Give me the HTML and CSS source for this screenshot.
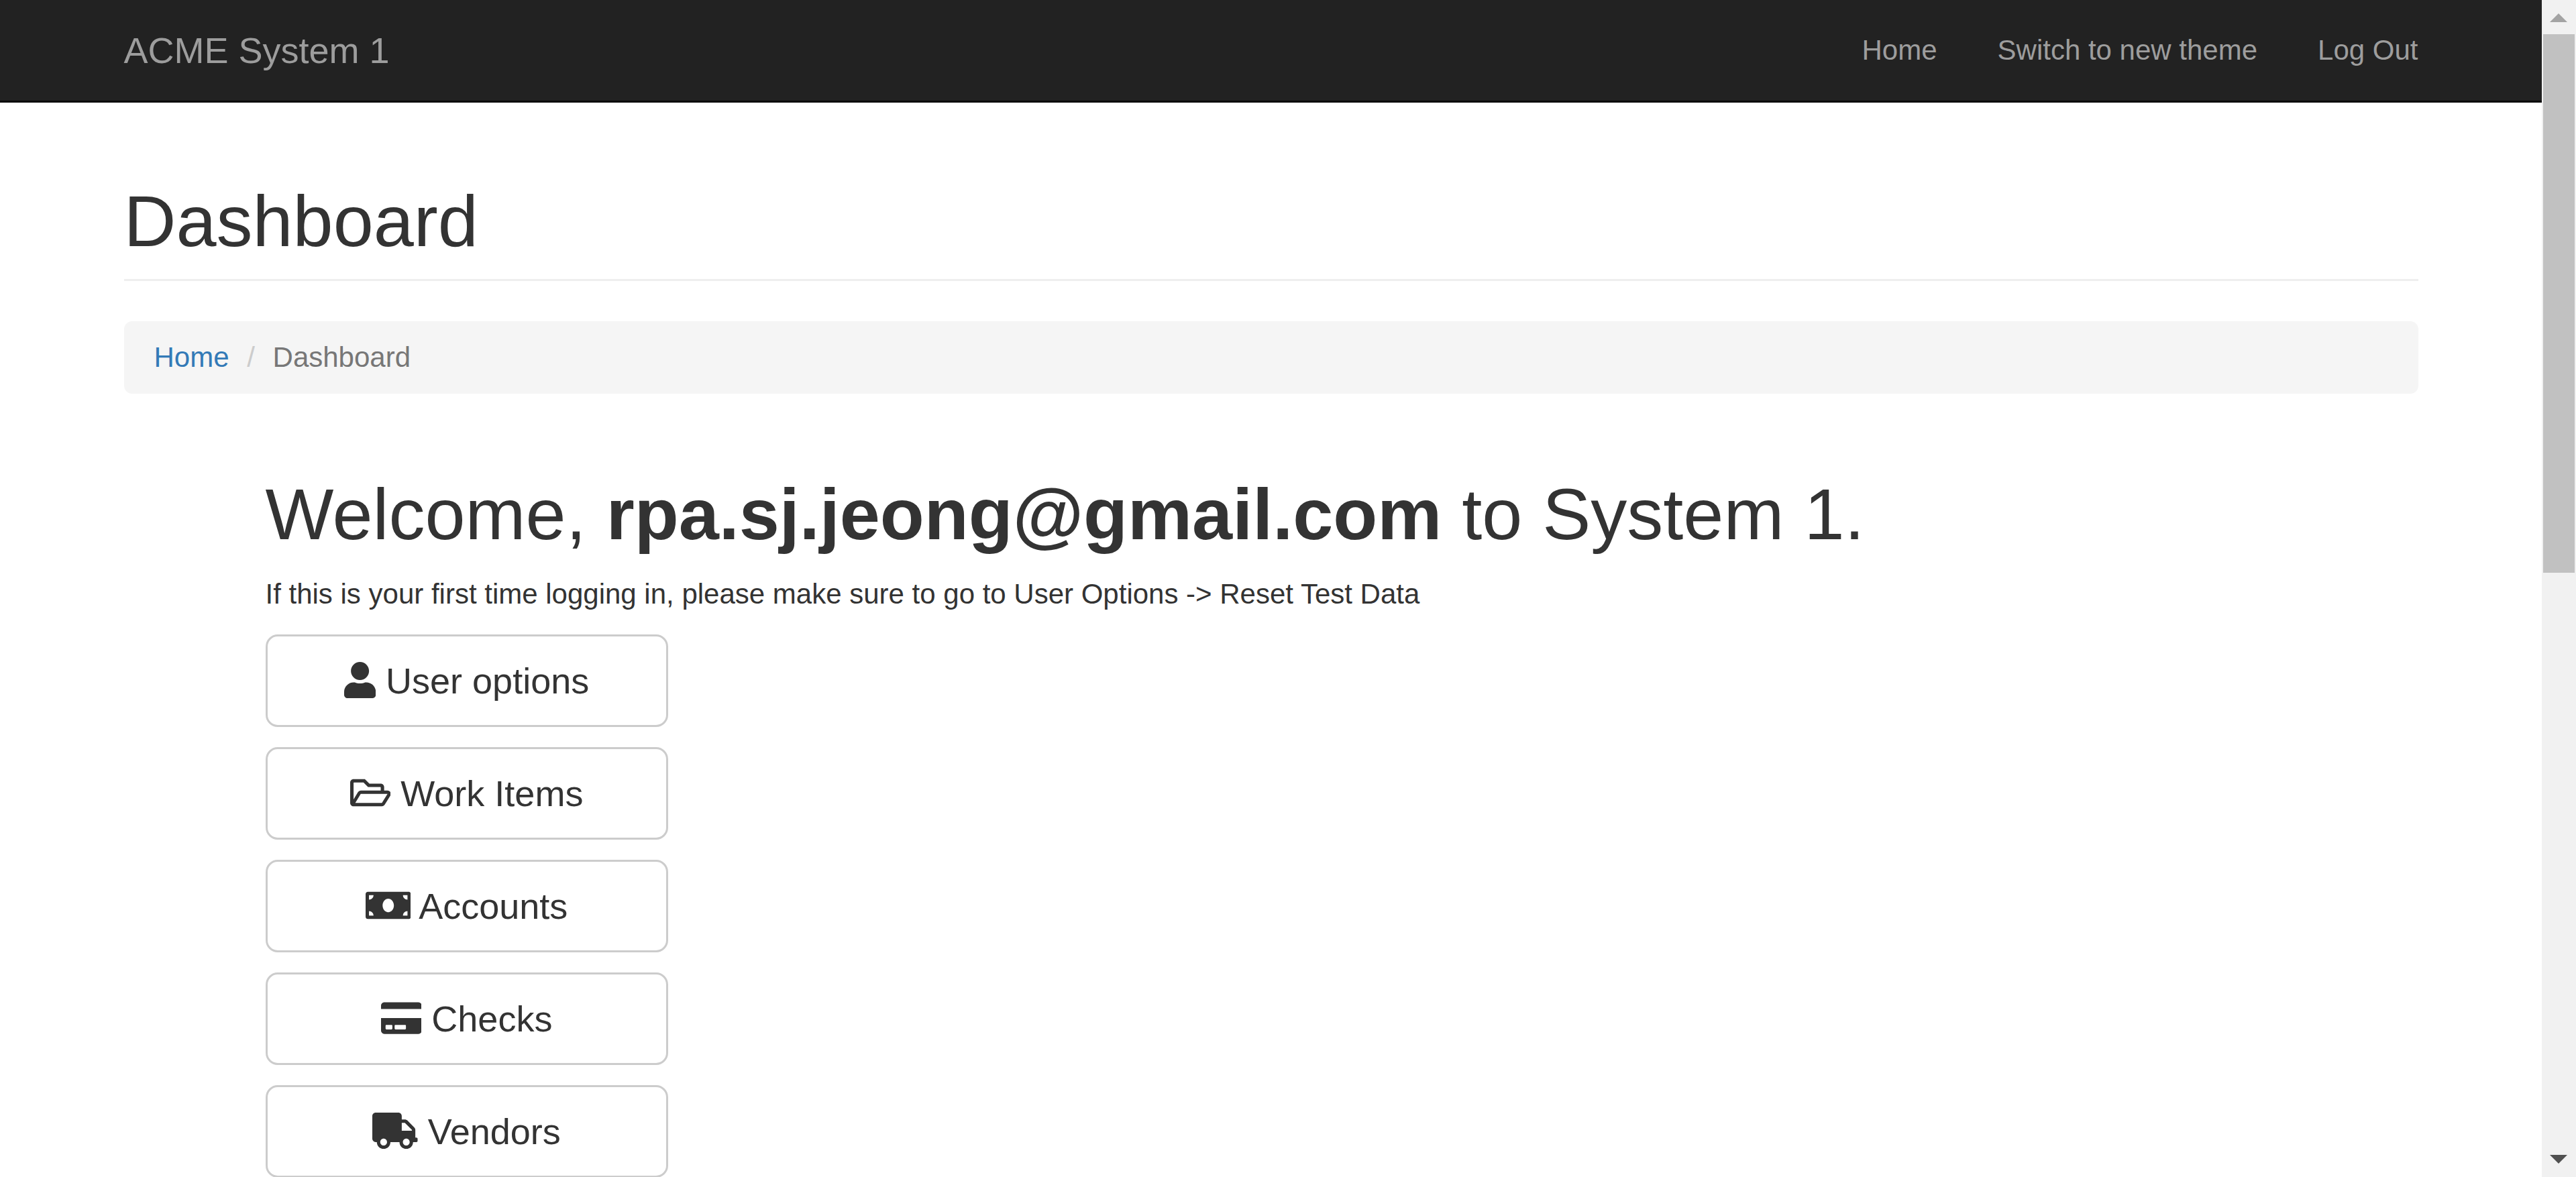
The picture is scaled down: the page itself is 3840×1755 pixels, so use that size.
FILE: index.html
```html
<!DOCTYPE html>
<html lang="en">
<head>
<meta charset="utf-8">
<title>ACME System 1 - Dashboard</title>
<link rel="stylesheet" href="styles.css">
</head>
<body>
<div class="window">
  <div class="page">
    <nav class="navbar">
      <div class="container navbar-row">
        <a class="navbar-brand" href="#">ACME System 1</a>
        <ul class="navbar-links">
          <li><a href="#">Home</a></li>
          <li><a href="#">Switch to new theme</a></li>
          <li><a href="#">Log Out</a></li>
        </ul>
      </div>
    </nav>
    <main class="container">
      <header class="page-header">
        <h1>Dashboard</h1>
      </header>
      <ol class="breadcrumb">
        <li><a href="#">Home</a></li>
        <li class="active">Dashboard</li>
      </ol>
      <section class="welcome">
        <h1>Welcome, <b>rpa.sj.jeong@gmail.com</b> to System 1.</h1>
        <p>If this is your first time logging in, please make sure to go to User Options -&gt; Reset Test Data</p>
        <div class="menu">
          <button class="btn" type="button"><svg class="icon" viewBox="0 0 448 512" aria-hidden="true"><path d="M224 256c70.7 0 128-57.3 128-128S294.7 0 224 0 96 57.3 96 128s57.3 128 128 128zm89.6 32h-16.7c-22.2 10.2-46.9 16-72.9 16s-50.6-5.8-72.9-16h-16.7C60.2 288 0 348.2 0 422.4V464c0 26.5 21.5 48 48 48h352c26.5 0 48-21.5 48-48v-41.6c0-74.2-60.2-134.4-134.4-134.4z"/></svg> User options</button>
          <button class="btn" type="button"><svg class="icon" viewBox="0 0 576 512" aria-hidden="true"><path d="M527.9 224H480v-48c0-26.5-21.5-48-48-48H272l-64-64H48C21.5 64 0 85.5 0 112v288c0 26.5 21.5 48 48 48h400c16.5 0 31.9-8.5 40.7-22.6l79.9-128c20-31.9-3-73.4-40.7-73.4zM48 118c0-3.3 2.7-6 6-6h134.1l64 64H426c3.3 0 6 2.7 6 6v42H152c-16.8 0-32.4 8.8-41.1 23.2L48 351.4zm400 282H72l77.2-128H528z"/></svg> Work Items</button>
          <button class="btn" type="button"><svg class="icon" viewBox="0 0 640 512" aria-hidden="true"><path d="M608 64H32C14.33 64 0 78.33 0 96v320c0 17.67 14.33 32 32 32h576c17.67 0 32-14.33 32-32V96c0-17.67-14.33-32-32-32zM48 400v-64c35.35 0 64 28.65 64 64H48zm0-224v-64h64c0 35.35-28.65 64-64 64zm272 176c-44.19 0-80-42.99-80-96 0-53.02 35.82-96 80-96s80 42.98 80 96c0 53.03-35.83 96-80 96zm272 48h-64c0-35.35 28.65-64 64-64v64zm0-224c-35.35 0-64-28.65-64-64h64v64z"/></svg> Accounts</button>
          <button class="btn" type="button"><svg class="icon" viewBox="0 0 576 512" aria-hidden="true"><path d="M0 432c0 26.5 21.5 48 48 48h480c26.5 0 48-21.5 48-48V256H0v176zm192-68c0-6.6 5.4-12 12-12h136c6.6 0 12 5.4 12 12v40c0 6.6-5.4 12-12 12H204c-6.6 0-12-5.4-12-12v-40zm-128 0c0-6.6 5.4-12 12-12h72c6.6 0 12 5.4 12 12v40c0 6.6-5.4 12-12 12H76c-6.6 0-12-5.4-12-12v-40zM576 80v48H0V80c0-26.5 21.5-48 48-48h480c26.5 0 48 21.5 48 48z"/></svg> Checks</button>
          <button class="btn" type="button"><svg class="icon" viewBox="0 0 640 512" aria-hidden="true"><path d="M624 352h-16V243.9c0-12.7-5.1-24.9-14.1-33.9L494 110.1c-9-9-21.2-14.1-33.9-14.1H416V48c0-26.5-21.5-48-48-48H48C21.5 0 0 21.5 0 48v320c0 26.5 21.5 48 48 48h16c0 53 43 96 96 96s96-43 96-96h128c0 53 43 96 96 96s96-43 96-96h48c8.8 0 16-7.2 16-16v-32c0-8.8-7.2-16-16-16zM160 464c-26.5 0-48-21.5-48-48s21.5-48 48-48 48 21.5 48 48-21.5 48-48 48zm320 0c-26.5 0-48-21.5-48-48s21.5-48 48-48 48 21.5 48 48-21.5 48-48 48zm80-208H416V144h44.1l99.9 99.9V256z"/></svg> Vendors</button>
        </div>
      </section>
    </main>
  </div>
  <div class="scrollbar" aria-hidden="true">
    <svg class="scroll-arrow up" viewBox="0 0 51 51"><path d="M12 33L25 20 38 33z"/></svg>
    <div class="scroll-track"><div class="scroll-thumb"></div></div>
    <svg class="scroll-arrow down" viewBox="0 0 51 51"><path d="M12 18L38 18 25 31z"/></svg>
  </div>
</div>
</body>
</html>
```
FILE: styles.css
```css
* {
  box-sizing: border-box;
}

body {
  margin: 0;
  background: #fff;
  color: #333;
  font: 42px/60px "Liberation Sans", Arial, sans-serif;
}

a {
  color: #337ab7;
  text-decoration: none;
}

h1,
p,
ul,
ol {
  margin: 0;
  padding: 0;
}

h1 {
  font-size: 108px;
  font-weight: 400;
  line-height: 119px;
}

.window {
  display: grid;
  grid-template-columns: minmax(0, 1fr) 51px;
  height: 100vh;
}

.page {
  min-height: 0;
  overflow-y: auto;
  scrollbar-width: none;
}

.container {
  max-width: 3510px;
  margin: 0 auto;
  padding: 0 45px;
}

/* Top bar */
.navbar {
  background: #222;
  border-bottom: 3px solid #080808;
}

.navbar-row {
  display: flex;
  justify-content: space-between;
  padding-top: 45px;
  padding-bottom: 45px;
}

.navbar a {
  color: #9d9d9d;
}

.navbar-brand {
  font-size: 54px;
}

.navbar-links {
  display: flex;
  gap: 90px;
  list-style: none;
}

/* Page heading */
.page-header {
  margin: 117px 0 60px;
  padding-bottom: 27px;
  border-bottom: 3px solid #eee;
}

.breadcrumb {
  margin-bottom: 120px;
  padding: 24px 45px;
  background: #f5f5f5;
  border-radius: 12px;
  list-style: none;
}

.breadcrumb li {
  display: inline-block;
}

.breadcrumb li + li::before {
  content: "/\00a0";
  padding: 0 15px;
  color: #ccc;
}

.breadcrumb .active {
  color: #777;
}

/* Welcome block */
.welcome {
  padding-left: 211px;
}

.welcome p {
  margin: 30px 0;
}

.menu {
  display: flex;
  flex-direction: column;
  align-items: flex-start;
  gap: 30px;
}

.btn {
  width: 600px;
  padding: 30px 48px;
  background: #fff;
  border: 3px solid #ccc;
  border-radius: 18px;
  color: #333;
  font: 54px/72px "Liberation Sans", Arial, sans-serif;
}

.icon {
  height: 1em;
  vertical-align: -0.125em;
  fill: currentColor;
}

/* Window scrollbar */
.scrollbar {
  display: flex;
  flex-direction: column;
  background: #f1f1f1;
}

.scroll-arrow {
  width: 51px;
  height: 51px;
}

.up {
  fill: #a3a3a3;
}

.down {
  fill: #505050;
}

.scroll-track {
  flex: 1;
  padding: 0 2px;
}

.scroll-thumb {
  height: 803px;
  background: #c1c1c1;
}
```
